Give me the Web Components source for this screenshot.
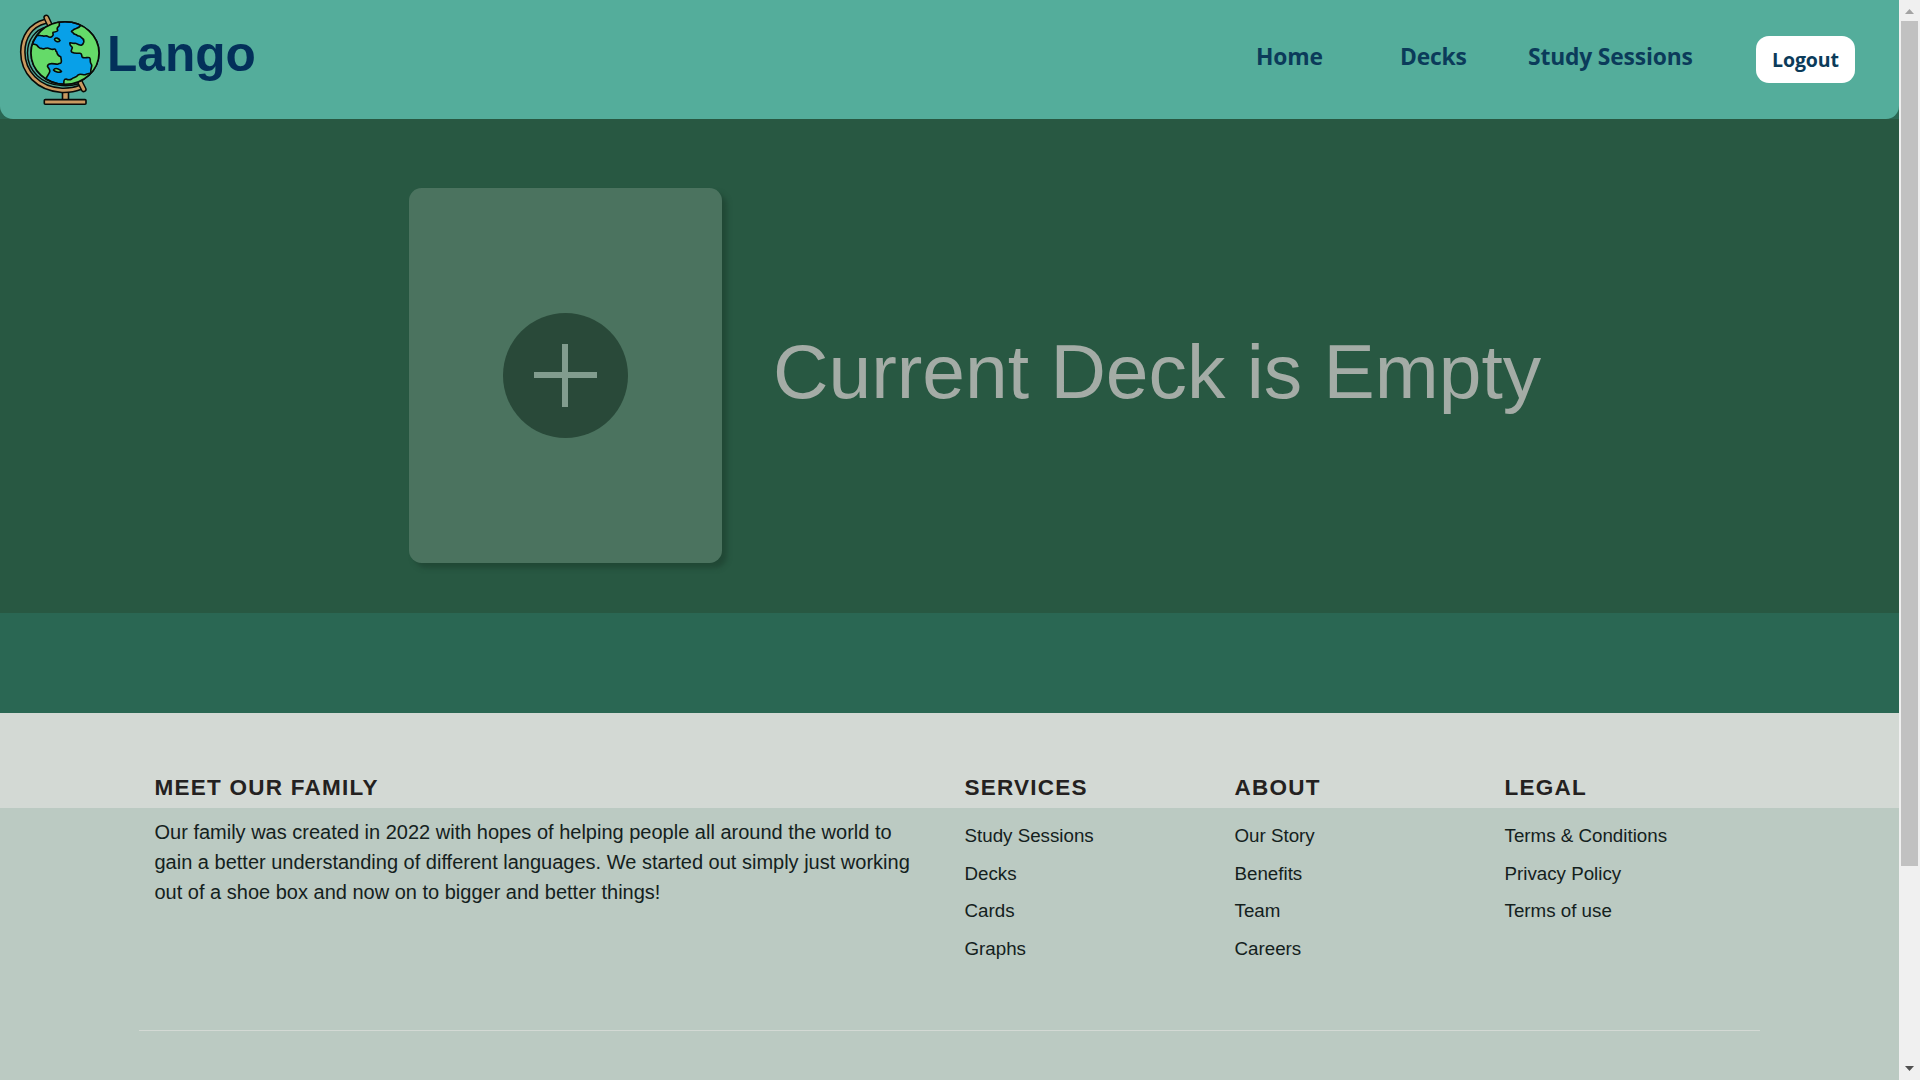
<!DOCTYPE html>
<html lang="en">
<head>
<meta charset="utf-8">
<title>Lango</title>
<style>
html,body{margin:0;height:100%;overflow:hidden}
body{font-family:"Liberation Sans",Arial,sans-serif;background:#2a6753}
</style>
</head>
<body>
<lango-app></lango-app>
<script>
const define = (name, html) => customElements.define(name, class extends HTMLElement {
  constructor() {
    super();
    const t = document.createElement('template');
    t.innerHTML = html;
    this.attachShadow({ mode: 'open' }).append(t.content.cloneNode(true));
  }
});

define('lango-globe', `
<style>:host{display:block;width:84px;height:96px}svg{display:block;overflow:visible}</style>
<svg width="84" height="96" viewBox="0 0 84 96" fill="none" stroke="#080b08" stroke-width="1.6" stroke-linejoin="round" stroke-linecap="round">
  <defs><clipPath id="ball"><ellipse cx="47" cy="41" rx="34" ry="31.300"/></clipPath></defs>
  <path d="M44.500 80h6v8h-6z" fill="#c99a60"/>
  <rect x="26.300" y="87.600" width="41.700" height="4.600" rx="1" fill="#c99a60"/>
  <path d="M27 9.500C13 13 4.800 25 4.800 40C4.800 60 20 77 44 78.300C51 78.500 57 77.500 62 75.500" stroke-width="5.800"/>
  <path d="M27 9.500C13 13 4.800 25 4.800 40C4.800 60 20 77 44 78.300C51 78.500 57 77.500 62 75.500" stroke="#c99a60" stroke-width="2.700"/>
  <path d="M29 14.500C17 18 9.500 28 9.500 41C9.500 59 24 72.500 44 73.600C50 74 55 73.500 60 72" stroke-width="1.400"/>
  <path d="M28.300 5.500L32.300 14M62 70L65.700 77.300" stroke-width="6"/>
  <path d="M28.300 5.500L32.300 14M62 70L65.700 77.300" stroke="#c99a60" stroke-width="3"/>
  <ellipse cx="47" cy="41" rx="34" ry="31.300" fill="#08a0e8"/>
  <g clip-path="url(#ball)" fill="#65da69">
    <path d="M16 25C20 22 22 24 24.300 23.700C26 25 28 23 29.700 24.300C32 26 34 25 34.700 23.700C36 22 34 21 35.300 20.300C38 20 40 19 39.700 18C38 16 40 15 41.300 13.700V8L20 6Z"/>
    <path d="M64 12C60 18 57 16 55.300 18C53 19 53 20 54.700 20.300C56 23 58 22 58.700 23C60 25 62 23 63 25.300C66 27 66 29 65.700 30.300C65 33 64 33 63 33.300C59 33 59 31 57 31.300C54 32 51 29 52 32.300C52 34 54 34 54.300 35.700C54 38 52 39 54 40.300C57 42 60 41 62 41.300C65 42 63 44 64.300 45.300C67 47 71 44 72 46.300C73 48 71 50 73.700 53C74 56 72 57 73 62L88 60V5Z"/>
    <path d="M11 33C14 31 16 32 18.700 33C21 36 22 37 23.700 36.300C26 38 26 36 28 36.300C30 35 33 38 35.300 37.300C39 36 37 40 38.700 39.700C39 42 40 44 42.700 44.700C43 47 44 49 43 50.700C42 52 41 51 39.700 52.300C36 52 34 51 31.300 52C28 54 30 55 30.700 56.300C32 58 32 60 31 61.300L27 68L5 60Z"/>
    <path d="M46 76C46 71 45 67 48 67C50 68 52 68 53.700 67C56 65 58 66 60.300 62.800C63 61 66 64 68 62.300L73 61L67 76Z"/>
    <path d="M36.500 27.500C37 25 41 26 42 28.500C40 31 37 29 36.500 27.500ZM35.500 58C37 55 42 57 43.500 59.500C41 61 37 60 35.500 58Z"/>
  </g>
  <ellipse cx="47" cy="41" rx="34" ry="31.300"/>
</svg>`);

define('nav-link', `
<style>:host{display:block;font:700 22.800px/32px "Open Sans","Noto Sans",sans-serif;letter-spacing:-.15px;color:#0b3b5a;white-space:nowrap}</style><slot></slot>`);

define('logout-button', `
<style>:host{display:block}
button{all:unset;box-sizing:border-box;display:flex;align-items:center;justify-content:center;width:99px;height:47px;border-radius:13px;background:#fff;color:#0b3b5a;font:700 19.500px/28px "Open Sans","Noto Sans",sans-serif;letter-spacing:-.1px;padding-top:1px}</style>
<button><slot></slot></button>`);

define('site-header', `
<style>
:host{display:flex;box-sizing:border-box;height:119px;background:#54ad9b;border-radius:0 0 13px 13px;padding:0 44px 0 18px}
lango-globe{margin:12px 0 0 0}
.brand{margin:25px 0 0 5px;font:bold 49.600px/58px "Liberation Sans",sans-serif;color:#03305a}
nav{display:flex;margin-left:auto;padding-top:36px;align-items:flex-start}
.a{width:144px;margin-top:5px}.b{width:128px;margin-top:5px}.c{width:228px;margin-top:5px}
</style>
<lango-globe></lango-globe><div class="brand">Lango</div>
<nav><nav-link class="a">Home</nav-link><nav-link class="b">Decks</nav-link><nav-link class="c">Study Sessions</nav-link><logout-button>Logout</logout-button></nav>`);

define('add-card', `
<style>
:host{display:flex;width:313px;height:375px;border-radius:12.500px;background:#4b735f;box-shadow:5px 5px 5px rgba(30,65,48,.7);align-items:center;justify-content:center}
svg{display:block}
</style>
<svg width="125" height="125" viewBox="0 0 125 125"><circle cx="62.500" cy="62.500" r="62.500" fill="#294939"/><path d="M31 59h63v6H31zM59 31h6v63h-6z" fill="#819c8e"/></svg>`);

define('deck-view', `
<style>
:host{display:flex;box-sizing:border-box;height:494px;background:#285842;padding:69px 0 0 409px}
h1{margin:135px 0 0 51px;font:400 76.800px/96px "Liberation Sans",sans-serif;color:#a4aca6;white-space:nowrap}
</style><add-card></add-card><h1><slot></slot></h1>`);

define('site-footer', `
<style>
:host{display:block;height:367px;margin-top:100px;background:linear-gradient(#d3d9d4 95px,#bbcac2 95px);color:#14211d}
.row{display:flex;width:1620px;margin:0 auto;padding-top:61px;height:256px}
hr{width:1621px;margin:0 auto;border:0;height:1px;background:#d3d9d4}
</style>
<div class="row">
<footer-column wide heading="Meet our family"><p>Our family was created in 2022 with hopes of helping people all around the world to<br>gain a better understanding of different languages. We started out simply just working<br>out of a shoe box and now on to bigger and better things!</p></footer-column>
<footer-column heading="Services"><a>Study Sessions</a><a>Decks</a><a>Cards</a><a>Graphs</a></footer-column>
<footer-column heading="About"><a>Our Story</a><a>Benefits</a><a>Team</a><a>Careers</a></footer-column>
<footer-column heading="Legal"><a>Terms &amp; Conditions</a><a>Privacy Policy</a><a>Terms of use</a></footer-column>
</div><hr>`);

customElements.define('footer-column', class extends HTMLElement {
  connectedCallback() {
    this.attachShadow({ mode: 'open' }).innerHTML = `
<style>
:host{display:block;box-sizing:border-box;width:270px;padding:0 15px}
:host([wide]){width:810px}
h6{margin:0 0 21px;font:bold 22.500px/27px "Liberation Sans",sans-serif;letter-spacing:1.250px;color:#242120;text-transform:uppercase}
::slotted(a){display:block;font-size:18.750px;line-height:28px;margin-bottom:9.500px}
::slotted(p){margin:-5px 0 0;font-size:20px;line-height:30px;white-space:nowrap}
</style><h6></h6><slot></slot>`;
    this.shadowRoot.querySelector('h6').textContent = this.getAttribute('heading');
  }
});

define('scroll-rail', `
<style>
:host{display:flex;flex-direction:column;box-sizing:border-box;width:21px;height:1080px;background:#f0f0f0;padding:0 2px}
svg{display:block}.thumb{width:17px;height:845px;background:#c1c1c1}.gap{flex:1}
</style>
<svg width="17" height="21"><path d="M4 14L8.500 9L13 14z" fill="#a3a3a3"/></svg>
<div class="thumb"></div><div class="gap"></div>
<svg width="17" height="21"><path d="M4 7L8.500 12L13 7z" fill="#505050"/></svg>`);

define('lango-app', `
<style>:host{display:flex;height:1080px}main{width:1899px;height:1080px;overflow:hidden;background:#2a6753}</style>
<main><site-header></site-header><deck-view>Current Deck is Empty</deck-view><site-footer></site-footer></main><scroll-rail></scroll-rail>`);
</script>
</body>
</html>
